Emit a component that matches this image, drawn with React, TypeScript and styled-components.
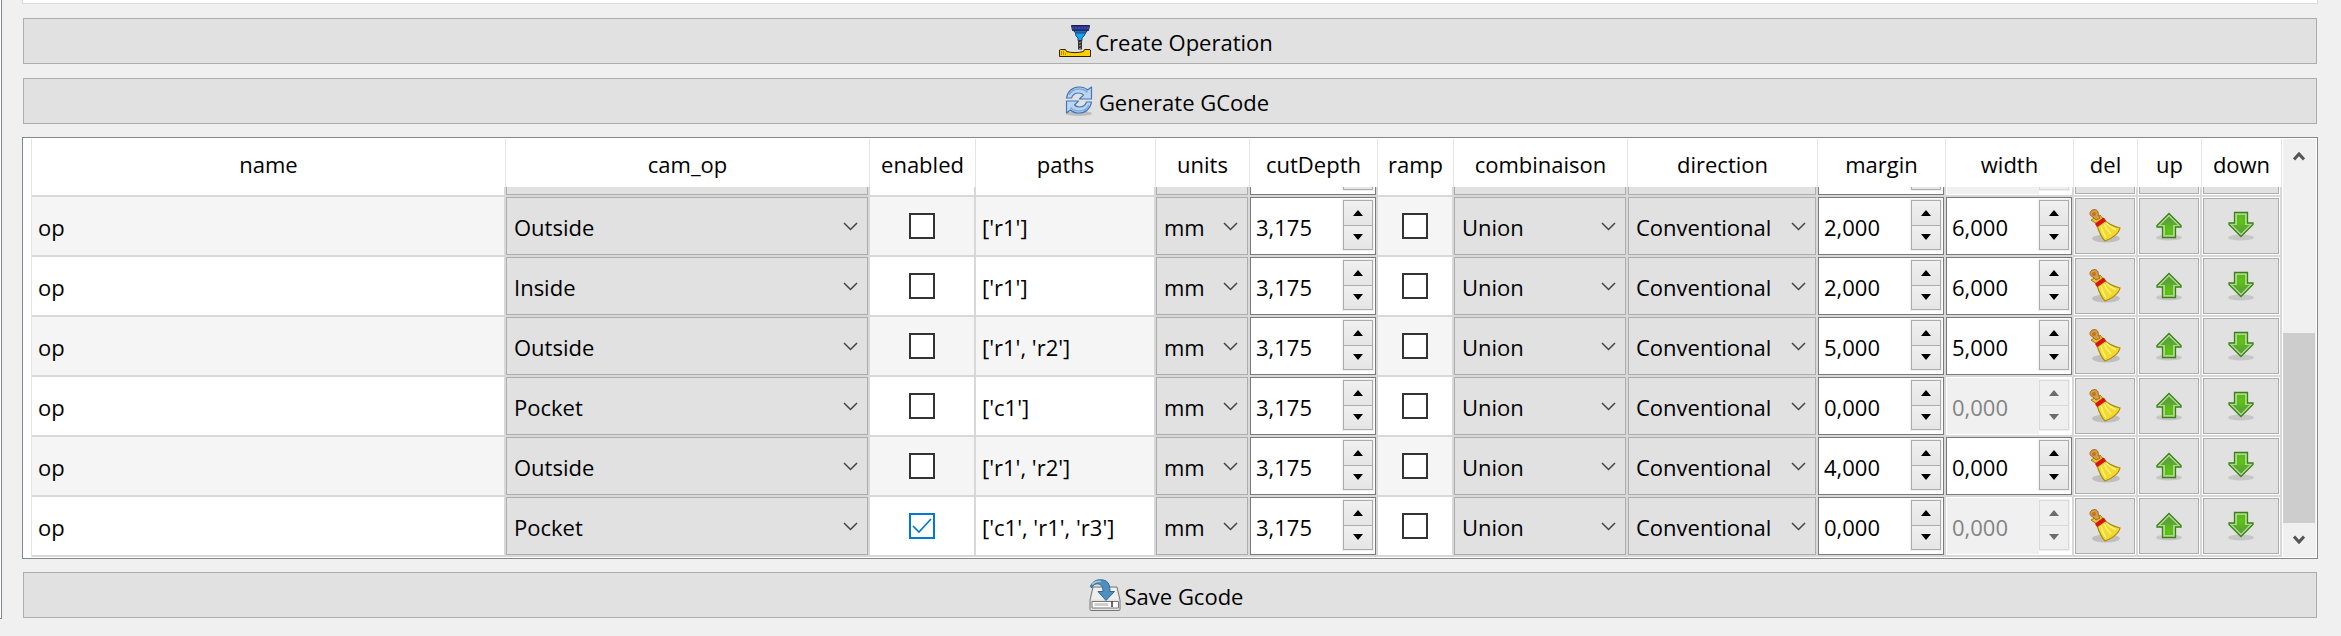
import React from "react";
import styled, { createGlobalStyle, css } from "styled-components";

const GlobalStyle = createGlobalStyle`
  * { box-sizing: border-box; }
  body {
    margin: 0;
    background: #f0f0f0;
    color: #000;
    font-family: "Open Sans", "Noto Sans", sans-serif;
    font-size: 22px;
    line-height: 30px;
  }
  button, input, select { font: inherit; color: inherit; margin: 0; }
`;

const Page = styled.div`
  display: flex;
  align-items: stretch;
`;

const SidePane = styled.div`
  flex: none;
  width: 2px;
  background: #fff;
  border-right: 1px solid #828790;
  border-bottom: 1px solid #828790;
`;

const Main = styled.main`
  flex: 1;
  min-width: 0;
  display: flex;
  flex-direction: column;
  margin: 0 23px 1px 20px;
`;

const EditorEdge = styled.div`
  height: 4px;
  background: #fff;
  border: 1px solid #dcdcdc;
  border-top: 0;
`;

const PushButton = styled.button`
  display: flex;
  align-items: center;
  justify-content: center;
  gap: 4px;
  height: 46px;
  margin: 14px 1px 0;
  padding: 0 8px 0 0;
  border: 1px solid #adadad;
  background: #e1e1e1;
  & > span { padding-top: 2px; }
`;

const TableFrame = styled.section`
  display: flex;
  margin: 13px 0 -1px;
  padding: 1px 1px 1px 8px;
  border: 1px solid #828790;
  background: #fff;
`;

const TableView = styled.div`
  flex: 1;
  min-width: 0;
`;

const Table = styled.table`
  width: 100%;
  table-layout: fixed;
  border-collapse: separate;
  border-spacing: 0;
  border-left: 1px solid #e5e5e5;
`;

const Th = styled.th<{ $w?: number }>`
  ${(p) => p.$w && css`width: ${p.$w}px;`}
  height: 48px;
  padding: 2px 0 0;
  border-right: 1px solid #e5e5e5;
  font-weight: 400;
  text-align: center;
  white-space: nowrap;
`;

const Tr = styled.tr<{ $alt?: boolean }>`
  background: ${(p) => (p.$alt ? "#f5f5f5" : "#fff")};
`;

const Td = styled.td`
  padding: 0;
  border-right: 2px solid #d8d8d8;
  border-bottom: 2px solid #d8d8d8;
`;

const Clip = styled.div<{ $cut?: boolean }>`
  display: flex;
  flex-direction: column;
  justify-content: flex-end;
  height: ${(p) => (p.$cut ? 8 : 58)}px;
  overflow: hidden;
  & > * { flex: none; height: 58px; }
`;

const Text = styled.div`
  display: flex;
  align-items: center;
  padding: 2px 6px 0;
  white-space: nowrap;
`;

const Stack = styled.div`
  display: grid;
  align-items: center;
  & > * { grid-area: 1 / 1; }
  & > svg { pointer-events: none; }
`;

const SelectBox = styled(Stack)`
  & > svg { justify-self: end; margin-right: 10px; }
`;

const Select = styled.select`
  appearance: none;
  width: 100%;
  height: 58px;
  padding: 2px 28px 0 7px;
  border: 1px solid #adadad;
  border-radius: 0;
  background: #e1e1e1;
`;

const CheckBox = styled(Stack)`
  justify-items: center;
`;

const Tick = styled.input`
  appearance: none;
  width: 26px;
  height: 26px;
  border: 2px solid #333;
  background: #fff;
  &:checked { border-color: #0078d7; }
`;

const Spin = styled.div<{ $off?: boolean }>`
  display: flex;
  border: 1px solid ${(p) => (p.$off ? "#fff" : "#7a7a7a")};
  background: #fff;
`;

const SpinInput = styled.input`
  flex: 1;
  min-width: 0;
  padding: 2px 0 0 5px;
  border: 0;
  background: #fff;
  &:disabled { background: #f0f0f0; color: #838383; }
`;

const SpinButtons = styled.div`
  display: flex;
  flex-direction: column;
  width: 30px;
  margin: 2px 2px 4px 0;
  border: 1px solid #adadad;
  box-shadow: 0 0 0 1px #f0f0f0;
  &[data-off="true"] { border-color: #d9d9d9; }
`;

const SpinButton = styled.button`
  flex: 1;
  display: flex;
  align-items: center;
  justify-content: center;
  padding: 0;
  border: 0;
  background: linear-gradient(#f0f0f0, #e5e5e5);
  fill: #000;
  & + & { border-top: 1px solid #adadad; }
  &:disabled { background: #efefef; border-color: #d9d9d9; fill: #6d6d6d; }
`;

const ToolButton = styled.button`
  display: flex;
  align-items: center;
  justify-content: center;
  width: 100%;
  padding: 0;
  border: 1px solid #adadad;
  background: #e1e1e1;
`;

const ToolCell = styled.div`
  display: flex;
  padding: 1px;
  background: #fff;
`;

const ScrollBar = styled.div`
  flex: none;
  display: flex;
  flex-direction: column;
  width: 33px;
  margin-left: 1px;
  padding-right: 1px;
  background: #f0f0f0;
`;

const ScrollButton = styled.button`
  display: flex;
  align-items: center;
  justify-content: center;
  height: 34px;
  padding: 0;
  border: 0;
  background: none;
`;

const Track = styled.div`
  flex: 1;
  display: flex;
  flex-direction: column;
  justify-content: flex-end;
`;

const Thumb = styled.div`
  height: 54.3%;
  background: #cdcdcd;
`;

const Chevron = () => (
  <svg width="15" height="9" viewBox="0 0 15 9" fill="none" stroke="#444" strokeWidth="1.5">
    <path d="M1 1l6.5 6.5L14 1" />
  </svg>
);

const ScrollArrow = ({ down }: { down?: boolean }) => (
  <svg width="12" height="10" viewBox="0 0 12 10" fill="none" stroke="#555" strokeWidth="3">
    <path d={down ? "M1 1.5l5 5.5 5-5.5" : "M1 8.5L6 3l5 5.5"} />
  </svg>
);

const Triangle = ({ down }: { down?: boolean }) => (
  <svg width="10" height="6" viewBox="0 0 10 6">
    <path d={down ? "M0 0h10L5 6z" : "M0 6h10L5 0z"} />
  </svg>
);

const MillIcon = () => (
  <svg width="32" height="32" viewBox="0 0 32 32">
    <path d="M12.500 .5h18l-1 5H13.500z" fill="#2b3189" stroke="#1b2050" />
    <path d="M14 2v2M17 2v2M20 2v2M23 2v2M26 2v2M29 2v2" stroke="#5960c0" />
    <path d="M14.500 5.500h14l-2.500 3h-9z" fill="#1c6fb8" stroke="#15305c" />
    <path d="M16.500 8h10l-1.500 3-2 2v2.500h-4v-2.500l-2-2z" fill="#18a0f0" stroke="#124a86" />
    <path d="M19 15h4v9.500h-4z" fill="#333" />
    <path d="M20 18l2-1M20 21l2-1M20 24l2-1" stroke="#999" />
    <path d="M.5 31.500V25l1-.5h5l1 2c5 1.500 12 1.500 17 0l1-2h5.500l.5.5v6.500z" fill="#ffd000" stroke="#2b2400" />
    <path d="M2.500 26v4M4.500 26v4M6.500 28v2" stroke="#b48a00" />
  </svg>
);

const RefreshIcon = () => (
  <svg width="32" height="32" viewBox="0 0 32 32">
    <ellipse cx="16" cy="28.500" rx="13" ry="2.500" fill="#bdbdbd" />
    <g fill="#bcd4ef" stroke="#4478b8" strokeWidth="1.200" strokeLinejoin="round">
      <path d="M3.500 13C4.500 6.500 9.500 2 16 2c4 0 6.500 1 8.500 3L28.500 2v12h-12l4-4c-1.500-1.500-3-2-5-2-4 0-6 2-7 5z" />
      <path d="M28.500 17c-1 6.500-6 11-12.500 11-4 0-6.500-1-8.500-3l-4 3V16h12l-4 4c1.500 1.500 3 2 5 2 4 0 6-2 7-5z" />
    </g>
    <path d="M6 10c2-4 5-6 10-6 4 0 6 1 8.500 3.500M26 20c-2 4-5 6-10 6-4 0-6-1-8.500-3.500" fill="none" stroke="#7fa9da" strokeWidth="1.500" />
  </svg>
);

const SaveIcon = () => (
  <svg width="32" height="32" viewBox="0 0 32 32">
    <path d="M4 8h24l3 13v9.500a1 1 0 0 1-1 1H2a1 1 0 0 1-1-1V21z" fill="#e2e2e0" stroke="#777" />
    <path d="M5 9h22l2.500 11.500h-27z" fill="#efefed" />
    <path d="M3 22.500h26.500V29H3z" fill="#fff" stroke="#777" />
    <path d="M5.500 24h14v3h-14z" fill="#d0d0ce" />
    <path d="M23 22.500V28" stroke="#000" strokeWidth="1.200" />
    <path d="M1.500 7C4 2 8 .5 12 .8c6 .2 9 3.200 9 11.700h4.500L17 21.500 9 12.500h5c0-4-1-6.500-4.500-7.500-3-.5-5 .5-7 4z" fill="#4f8fc0" stroke="#2f6795" />
    <path d="M3 5.500C6 2.500 9 2 12 2.500" fill="none" stroke="#a9c9c9" strokeWidth="1.500" />
  </svg>
);

const BroomIcon = () => (
  <svg width="34" height="34" viewBox="0 0 34 34">
    <ellipse cx="18" cy="29.500" rx="14" ry="4" fill="#bfbfbf" />
    <path d="M3 11l9-5 4 5-7 4z" fill="#e8c92c" stroke="#a07c10" />
    <path d="M5 8c-3-1-4-4-2-6s6-2 7 1c.5 2 0 3 2 6l-4 2z" fill="#d79a4c" stroke="#a06a20" />
    <circle cx="6" cy="5" r="2" fill="#c07818" />
    <path d="M9 16l7-5c3 3 9 6 16 8-1 5-8 11-15 13-3-3-6-9-8-16z" fill="#f3d92c" stroke="#ad8a10" strokeWidth="1.200" />
    <path d="M13 17c1 5 3 9 5 12M16 15c2 5 5 8 7 10M18 14c3 3 6 5 10 7" fill="none" stroke="#fbf08a" strokeWidth="1.500" />
    <path d="M8.500 15l7-5M9.500 16.500l7-5" stroke="#d81414" strokeWidth="2.600" strokeLinecap="round" />
  </svg>
);

const ArrowIcon = ({ down }: { down?: boolean }) => (
  <svg width="28" height="30" viewBox="0 0 28 30">
    <defs>
      <radialGradient id={down ? "leafDown" : "leafUp"} cx="0.5" cy={down ? "0.7" : "0.8"} r="0.6">
        <stop offset="0" stopColor="#5fc80c" />
        <stop offset="1" stopColor="#5aa03a" />
      </radialGradient>
    </defs>
    <ellipse cx="14" cy="26.500" rx="13" ry="3" fill="#c6c6c6" />
    <g transform={down ? "matrix(1 0 0 -1 0 28)" : undefined} strokeLinejoin="miter">
      <path d="M14 2.500L26 14.500V16h-5.500v10.500h-13V16H2v-1.500z" fill="#a8da8c" stroke="#3d7f14" strokeWidth="1.300" />
      <path d="M14 5.500l8.500 8.500H18v10h-8V14H5.500z" fill={down ? "url(#leafDown)" : "url(#leafUp)"} />
    </g>
  </svg>
);

type Operation = {
  op: string;
  enabled?: boolean;
  paths: string;
  margin: string;
  width: string;
  widthOff?: boolean;
  alt?: boolean;
  cut?: boolean;
};

const operations: Operation[] = [
  { op: "Pocket", paths: "", margin: "0,000", width: "0,000", widthOff: true, cut: true },
  { op: "Outside", paths: "['r1']", margin: "2,000", width: "6,000", alt: true },
  { op: "Inside", paths: "['r1']", margin: "2,000", width: "6,000" },
  { op: "Outside", paths: "['r1', 'r2']", margin: "5,000", width: "5,000", alt: true },
  { op: "Pocket", paths: "['c1']", margin: "0,000", width: "0,000", widthOff: true },
  { op: "Outside", paths: "['r1', 'r2']", margin: "4,000", width: "0,000", alt: true },
  { op: "Pocket", enabled: true, paths: "['c1', 'r1', 'r3']", margin: "0,000", width: "0,000", widthOff: true },
];

const columns: { name: string; w?: number }[] = [
  { name: "name" },
  { name: "cam_op", w: 364 },
  { name: "enabled", w: 106 },
  { name: "paths", w: 180 },
  { name: "units", w: 94 },
  { name: "cutDepth", w: 128 },
  { name: "ramp", w: 76 },
  { name: "combinaison", w: 174 },
  { name: "direction", w: 190 },
  { name: "margin", w: 128 },
  { name: "width", w: 128 },
  { name: "del", w: 64 },
  { name: "up", w: 64 },
  { name: "down", w: 80 },
];

const Combo = ({ label, value, options }: { label: string; value: string; options: string[] }) => (
  <SelectBox>
    <Select aria-label={label} defaultValue={value}>
      {options.map((o) => <option key={o}>{o}</option>)}
    </Select>
    <Chevron />
  </SelectBox>
);

const Check = ({ label, on }: { label: string; on?: boolean }) => (
  <CheckBox>
    <Tick type="checkbox" aria-label={label} defaultChecked={on} />
    {on && (
      <svg width="20" height="16" viewBox="0 0 20 16" fill="none" stroke="#0078d7" strokeWidth="1.700">
        <path d="M1 8l6 6L19 1" />
      </svg>
    )}
  </CheckBox>
);

const SpinBox = ({ label, value, off }: { label: string; value: string; off?: boolean }) => (
  <Spin $off={off}>
    <SpinInput type="text" aria-label={label} defaultValue={value} disabled={off} />
    <SpinButtons data-off={!!off}>
      <SpinButton aria-label={`Increase ${label}`} disabled={off}><Triangle /></SpinButton>
      <SpinButton aria-label={`Decrease ${label}`} disabled={off}><Triangle down /></SpinButton>
    </SpinButtons>
  </Spin>
);

const Tool = ({ label, children }: { label: string; children: React.ReactNode }) => (
  <ToolCell><ToolButton aria-label={label}>{children}</ToolButton></ToolCell>
);

const OperationRow = ({ row }: { row: Operation }) => {
  const cells = [
    <Text>{row.cut ? "" : "op"}</Text>,
    <Combo label="cam_op" value={row.op} options={["Outside", "Inside", "Pocket"]} />,
    <Check label="enabled" on={row.enabled} />,
    <Text>{row.paths}</Text>,
    <Combo label="units" value="mm" options={["mm", "inch"]} />,
    <SpinBox label="cutDepth" value="3,175" />,
    <Check label="ramp" />,
    <Combo label="combinaison" value="Union" options={["Union", "Difference"]} />,
    <Combo label="direction" value="Conventional" options={["Conventional", "Climb"]} />,
    <SpinBox label="margin" value={row.margin} />,
    <SpinBox label="width" value={row.width} off={row.widthOff} />,
    <Tool label="Delete"><BroomIcon /></Tool>,
    <Tool label="Move up"><ArrowIcon /></Tool>,
    <Tool label="Move down"><ArrowIcon down /></Tool>,
  ];
  return (
    <Tr $alt={row.alt}>
      {cells.map((cell, i) => (
        <Td key={columns[i].name}><Clip $cut={row.cut}>{cell}</Clip></Td>
      ))}
    </Tr>
  );
};

export default function App() {
  return (
    <>
      <GlobalStyle />
      <Page>
        <SidePane />
        <Main>
          <EditorEdge />
          <PushButton><MillIcon /><span>Create Operation</span></PushButton>
          <PushButton><RefreshIcon /><span>Generate GCode</span></PushButton>
          <TableFrame>
            <TableView>
              <Table>
                <thead>
                  <tr>
                    {columns.map((c) => <Th key={c.name} $w={c.w} scope="col">{c.name}</Th>)}
                  </tr>
                </thead>
                <tbody>
                  {operations.map((row, i) => <OperationRow key={i} row={row} />)}
                </tbody>
              </Table>
            </TableView>
            <ScrollBar>
              <ScrollButton aria-label="Scroll up"><ScrollArrow /></ScrollButton>
              <Track><Thumb /></Track>
              <ScrollButton aria-label="Scroll down"><ScrollArrow down /></ScrollButton>
            </ScrollBar>
          </TableFrame>
          <PushButton><SaveIcon /><span>Save Gcode</span></PushButton>
        </Main>
      </Page>
    </>
  );
}
